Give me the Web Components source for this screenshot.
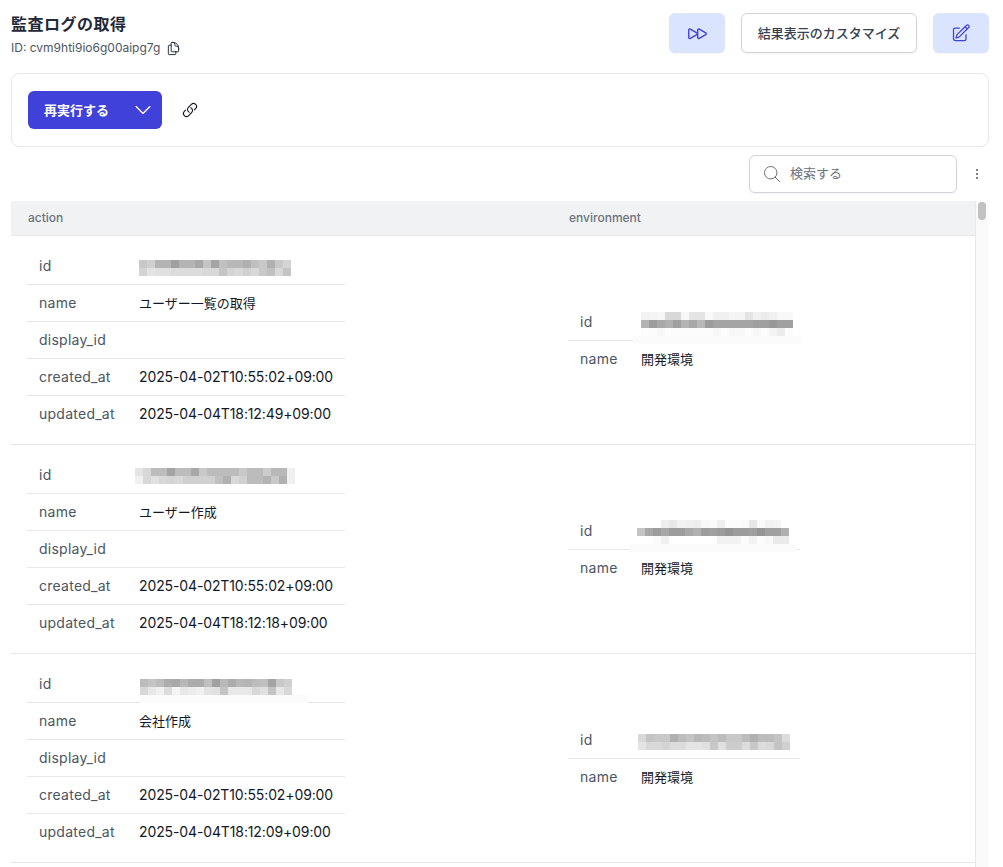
<!DOCTYPE html>
<html lang="ja"><head><meta charset="utf-8"><title>監査ログの取得</title>
<style>
html,body{margin:0;height:100%;overflow:hidden;background:#fff}
body{font-family:Inter,"Noto Sans CJK JP",sans-serif;color:#111827}
</style></head><body>
<audit-page>
  <page-header slot="header" heading="監査ログの取得" ident="ID: cvm9hti9io6g00aipg7g">
    <icon-button tone="light" icon="forward" size="22"></icon-button>
    <icon-button tone="outline">結果表示のカスタマイズ</icon-button>
    <icon-button tone="light" icon="pencil" size="20"></icon-button>
  </page-header>
  <run-card slot="card"></run-card>
  <search-bar slot="search"></search-bar>
  <data-table slot="table">
    <table-row>
      <kv-table slot="a" style="--w:318px;--k:112px">
        <kv-row key="id"><pixel-blur x="112" y="12" rows="c8d0b4b4a0b4b4a8c4a4c0b8b8b0c0c8b0c8d4|d4e4e0e0dcdcdcdcd8d8c4d4d8d0d8c8c0d8c4"></pixel-blur></kv-row>
        <kv-row key="name">ユーザー一覧の取得</kv-row>
        <kv-row key="display_id"></kv-row>
        <kv-row key="created_at" latin>2025-04-02T10:55:02+09:00</kv-row>
        <kv-row key="updated_at" latin>2025-04-04T18:12:49+09:00</kv-row>
      </kv-table>
      <kv-table slot="b" style="--w:232px;--k:73px">
        <kv-row key="id"><pixel-blur x="65" y="32" cw="168" rows="fb"></pixel-blur><pixel-blur x="73" y="8" rows="f2f4f6d8d8f8e4e4f8f0f0f4f4e4f0ecf0f8f8|b49ca8b0a0b4a8b89ca4a4a4a4a4a0a098a0a0|fcfcf8fcfcfcfcfcfcf8fcf8f8fcf8fcf4ecfc"></pixel-blur></kv-row>
        <kv-row key="name">開発環境</kv-row>
      </kv-table>
    </table-row>
    <table-row>
      <kv-table slot="a" style="--w:318px;--k:112px">
        <kv-row key="id"><pixel-blur x="108" y="11" rows="e4d8bcbca4bcbca8c8bcbcbcbcc8bcbcccb8b8f0|f0d8e0d8d4d8d0d0d0d0c0b0d8d0bcbcb4c8b0f0"></pixel-blur></kv-row>
        <kv-row key="name">ユーザー作成</kv-row>
        <kv-row key="display_id"></kv-row>
        <kv-row key="created_at" latin>2025-04-02T10:55:02+09:00</kv-row>
        <kv-row key="updated_at" latin>2025-04-04T18:12:18+09:00</kv-row>
      </kv-table>
      <kv-table slot="b" style="--w:232px;--k:73px">
        <kv-row key="id"><pixel-blur x="61" y="31" cw="168" rows="fb"></pixel-blur><pixel-blur x="69" y="7" rows="ffffffeee8f2f0eef8faeffcfcfae6faf2f4fe|c4a89ca89c9ca8b09ca09c949c9ca094a0a0b0|fffffbf0fffffffffffff2f2f2fcf2fcf8eaea"></pixel-blur></kv-row>
        <kv-row key="name">開発環境</kv-row>
      </kv-table>
    </table-row>
    <table-row>
      <kv-table slot="a" style="--w:318px;--k:112px">
        <kv-row key="id"><pixel-blur x="113" y="29" cw="168" rows="fb"></pixel-blur><pixel-blur x="113" y="13" rows="bcc4bcaca8b8acacc0a0b8acb8b4bcc0a4c8d0|d8e8f0dcf4e8ecf0e4e0c4e8e8e8d8e0c4e8d8"></pixel-blur></kv-row>
        <kv-row key="name">会社作成</kv-row>
        <kv-row key="display_id"></kv-row>
        <kv-row key="created_at" latin>2025-04-02T10:55:02+09:00</kv-row>
        <kv-row key="updated_at" latin>2025-04-04T18:12:09+09:00</kv-row>
      </kv-table>
      <kv-table slot="b" style="--w:232px;--k:73px">
        <kv-row key="id"><pixel-blur x="70" y="12" rows="d8c4c8c8b0bcc4b8bcc4bcc8c8bcb0bcbcc4dc|e4d8d8d4dcdce4e4e0c8e0ccccdcc8dcd8c4d0"></pixel-blur></kv-row>
        <kv-row key="name">開発環境</kv-row>
      </kv-table>
    </table-row>
  </data-table>
</audit-page>
<script>
const ICONS={
forward:'<path d="M3 8.689c0-.864.933-1.406 1.683-.977l7.108 4.061a1.125 1.125 0 0 1 0 1.954l-7.108 4.061A1.125 1.125 0 0 1 3 16.811V8.69ZM12.75 8.689c0-.864.933-1.406 1.683-.977l7.108 4.061a1.125 1.125 0 0 1 0 1.954l-7.108 4.061a1.125 1.125 0 0 1-1.683-.977V8.69Z"/>',
pencil:'<path d="m16.862 4.487 1.687-1.688a1.875 1.875 0 1 1 2.652 2.652L10.582 16.07a4.5 4.5 0 0 1-1.897 1.13L6 18l.8-2.685a4.5 4.5 0 0 1 1.13-1.897l8.932-8.931Zm0 0L19.5 7.125M18 14v4.75A2.25 2.25 0 0 1 15.75 21H5.25A2.25 2.25 0 0 1 3 18.75V8.25A2.25 2.25 0 0 1 5.25 6H10"/>',
copy:'<path d="M15.75 17.25v3.375c0 .621-.504 1.125-1.125 1.125h-9.75a1.125 1.125 0 0 1-1.125-1.125V7.875c0-.621.504-1.125 1.125-1.125H6.75a9.06 9.06 0 0 1 1.5.124m7.5 10.376h3.375c.621 0 1.125-.504 1.125-1.125V11.25c0-4.46-3.243-8.161-7.5-8.876a9.06 9.06 0 0 0-1.5-.124H9.375c-.621 0-1.125.504-1.125 1.125v3.5m7.5 10.375H9.375a1.125 1.125 0 0 1-1.125-1.125v-9.25m12 6.625v-1.875a3.375 3.375 0 0 0-3.375-3.375h-1.5a1.125 1.125 0 0 1-1.125-1.125v-1.5a3.375 3.375 0 0 0-3.375-3.375H9.75"/>',
link:'<path d="M13.19 8.688a4.5 4.5 0 0 1 1.242 7.244l-4.5 4.5a4.5 4.5 0 0 1-6.364-6.364l1.757-1.757m13.35-.622 1.757-1.757a4.5 4.5 0 0 0-6.364-6.364l-4.5 4.5a4.5 4.5 0 0 0 1.242 7.244"/>',
chevron:'<path d="m19.5 8.25-7.5 7.5-7.5-7.5"/>',
search:'<path d="m21 21-5.197-5.197m0 0A7.5 7.5 0 1 0 5.196 5.196a7.5 7.5 0 0 0 10.607 10.607Z"/>'};
const svg=(n,s,w=1.5)=>`<svg xmlns="http://www.w3.org/2000/svg" width="${s}" height="${s}" viewBox="0 0 24 24" fill="none" stroke="currentColor" stroke-width="${w}" stroke-linecap="round" stroke-linejoin="round" style="display:block">${ICONS[n]}</svg>`;
function def(name,css,html){
  customElements.define(name,class extends HTMLElement{
    connectedCallback(){
      if(this.shadowRoot)return;
      const r=this.attachShadow({mode:'open'});
      r.innerHTML=`<style>${css}</style>`+(typeof html==='function'?html(this):html);
    }
  });
}
def('audit-page',`:host{display:flex;flex-direction:column;box-sizing:border-box;height:867px;padding:13px 14px 0 11px;overflow:hidden}`,
 `<slot name="header"></slot><slot name="card"></slot><slot name="search"></slot><slot name="table"></slot>`);
def('page-header',`:host{display:flex;justify-content:space-between;align-items:flex-start;height:40px;margin-bottom:20px}
 h1{margin:0;font-size:16px;line-height:24px;font-weight:700;color:#1f2937;letter-spacing:.5px;margin-top:-1px}
 .id{display:flex;align-items:center;gap:6px;font-size:12px;line-height:18px;color:#4b5563;margin-top:3px}
 .id svg{color:#1f2937}
 .acts{display:flex;gap:16px}`,
 h=>`<div><h1>${h.getAttribute('heading')}</h1><div class="id"><span>${h.getAttribute('ident')}</span>${svg('copy',15)}</div></div><div class="acts"><slot></slot></div>`);
def('icon-button',`:host{display:flex;align-items:center;justify-content:center;box-sizing:border-box;height:40px;border-radius:6px;font-size:13px;font-weight:500}
 :host([tone=light]){width:56px;background:#dbe4fe;color:#3f41d9;box-shadow:0 1px 2px rgba(0,0,0,.05)}
 :host([tone=outline]){width:176px;padding-bottom:2px;background:#fff;color:#374151;border:1px solid #d1d5db;box-shadow:0 1px 2px rgba(0,0,0,.05)}`,
 h=>h.getAttribute('icon')?svg(h.getAttribute('icon'),+h.getAttribute('size')):'<slot></slot>');
def('run-card',`:host{display:flex;align-items:center;gap:20px;box-sizing:border-box;height:74px;padding:0 16px;border:1px solid #e5e7eb;border-radius:8px;background:#fff;margin-bottom:8px}
 .btn{display:flex;align-items:center;justify-content:space-between;box-sizing:border-box;width:134px;height:38px;padding:0 8px 0 16px;background:#3f41d9;color:#fff;border-radius:6px;font-size:13px;font-weight:600}
 .btn span{padding-bottom:2px}
 .link{color:#111827}`,
 `<div class="btn"><span>再実行する</span>${svg('chevron',22,1.4)}</div><div class="link">${svg('link',16,1.7)}</div>`);
def('search-bar',`:host{display:flex;justify-content:flex-end;align-items:center;height:38px;margin-bottom:8px}
 .box{display:flex;align-items:center;gap:8px;box-sizing:border-box;width:208px;height:38px;padding-left:12px;border:1px solid #d1d5db;border-radius:6px;background:#fff;box-shadow:0 1px 2px rgba(0,0,0,.05);font-size:13px;color:#6b7280}
 .box span{padding-bottom:3px}
 .box svg{color:#6b7280}
 .kebab{display:flex;flex-direction:column;gap:2px;width:32px;box-sizing:border-box;padding-right:11px;align-items:flex-end}
 .kebab i{width:2px;height:2px;border-radius:50%;background:#4b5563}`,
 `<div class="box">${svg('search',20,1.2)}<span>検索する</span></div><div class="kebab"><i></i><i></i><i></i></div>`);
def('data-table',`:host{display:grid;grid-template-columns:1fr 14px;flex:1;min-height:0;overflow:hidden}
 .head{display:grid;grid-template-columns:541px 1fr;height:35px;padding-bottom:2px;align-items:center;box-sizing:border-box;background:#f1f2f4;border-bottom:1px solid #e5e7eb;font-size:12px;font-weight:500;color:#6b7280}
 .head span{padding-left:17px}
 .bar{background:#fafafa;border-left:1px solid #e8e8e8;padding:1px 3px 0 2px;box-sizing:border-box}
 .bar i{display:block;height:18px;border-radius:4px;background:#c1c1c1}`,
 `<div><div class="head"><span>action</span><span>environment</span></div><slot></slot></div><div class="bar"><i></i></div>`);
def('table-row',`:host{display:grid;grid-template-columns:541px 1fr;align-items:center;box-sizing:border-box;height:209px;padding:0 0 0 16px;border-bottom:1px solid #e5e7eb}
 .a{padding-top:1px}
 .b{padding-top:2px}`,
 `<div class="a"><slot name="a"></slot></div><div class="b"><slot name="b"></slot></div>`);
def('kv-table',`:host{display:block;width:var(--w)}`,`<slot></slot>`);
def('kv-row',`:host{display:grid;grid-template-columns:var(--k) 1fr;align-items:center;position:relative;box-sizing:border-box;height:37px;padding-bottom:1px;line-height:20px;border-bottom:1px solid #e5e7eb;font-size:13px;color:#111827}
 :host(:last-child){border-bottom:0}
 :host([latin]){font-size:14px;letter-spacing:-.12px}
 .k{padding-left:12px;color:#4b5563;font-size:14px;letter-spacing:.25px}`,
 h=>`<div class="k">${h.getAttribute('key')}</div><div><slot></slot></div>`);
def('pixel-blur',`:host{position:absolute;display:flex;flex-direction:column}
 .r{display:flex;height:8px}.r i{display:block;flex:none;height:8px}`,
 h=>{
  const cw=h.getAttribute('cw')||8;
  h.style.left=h.getAttribute('x')+'px';h.style.top=h.getAttribute('y')+'px';
  return h.getAttribute('rows').split('|').map(row=>{
    const v=row.match(/../g);
    return '<div class="r">'+v.map(c=>`<i style="width:${cw}px;background:#${c}${c}${c}"></i>`).join('')+'</div>';
  }).join('');
 });
</script>
</body></html>
